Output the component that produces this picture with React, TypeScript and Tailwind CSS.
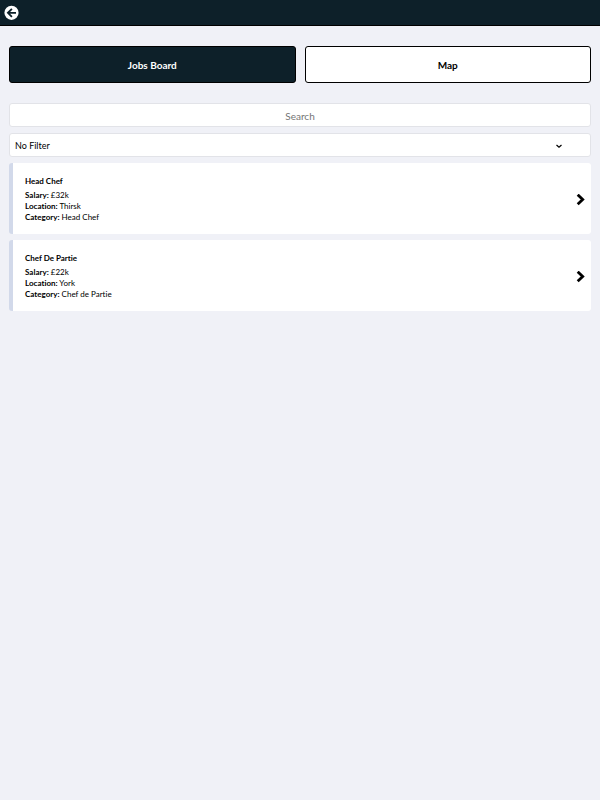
import React, { useState } from 'react';

interface Job {
  id: number;
  title: string;
  salary: string;
  location: string;
  category: string;
}

const jobs: Job[] = [
  { id: 1, title: 'Head Chef', salary: '£32k', location: 'Thirsk', category: 'Head Chef' },
  { id: 2, title: 'Chef De Partie', salary: '£22k', location: 'York', category: 'Chef de Partie' },
];

const categories = ['Head Chef', 'Chef de Partie'];

interface TabButtonProps {
  label: string;
  active: boolean;
  onClick: () => void;
}

const TabButton: React.FC<TabButtonProps> = ({ label, active, onClick }) => (
  <button
    type="button"
    onClick={onClick}
    className={`h-[37px] flex-1 rounded-[3px] border border-black pt-[2px] text-[10px] font-bold ${
      active ? 'bg-[#0d2029] text-white' : 'bg-white text-black'
    }`}
  >
    {label}
  </button>
);

const JobCard: React.FC<{ job: Job }> = ({ job }) => (
  <a
    href={`#job-${job.id}`}
    className="flex items-center justify-between rounded-[3px] border-l-4 border-[#d2d9ea] bg-white pt-[13px] pr-[5px] pb-[11px] pl-3 text-black"
  >
    <div className="text-[8px] leading-[11px]">
      <h2 className="mb-[3px] font-bold">{job.title}</h2>
      <p><strong>Salary:</strong> {job.salary}</p>
      <p><strong>Location:</strong> {job.location}</p>
      <p><strong>Category:</strong> {job.category}</p>
    </div>
    {/* Chevron */}
    <svg
      className="h-3 w-[10px]"
      viewBox="0 0 10 12"
      fill="none"
      stroke="currentColor"
      strokeWidth="2.8"
      aria-hidden="true"
    >
      <path d="M1.7 0.7 L6.7 5.5 L1.7 10.3" />
    </svg>
  </a>
);

const App: React.FC = () => {
  const [tab, setTab] = useState<'jobs' | 'map'>('jobs');
  const [search, setSearch] = useState('');
  const [filter, setFilter] = useState('');

  const visibleJobs = jobs.filter(
    (job) =>
      job.title.toLowerCase().includes(search.toLowerCase()) &&
      (!filter || job.category === filter)
  );

  return (
    <div className="min-h-screen bg-[#f0f1f7] font-['Lato',sans-serif] [font-variant-ligatures:none]">
      <header className="flex h-[26px] items-center border-b border-black bg-[#0d2029] px-1">
        <button type="button" aria-label="Back">
          <svg className="size-[15px]" viewBox="0 0 15 15" fill="none">
            <circle cx="7.5" cy="7.8" r="7.1" fill="white" />
            <path d="M12 7.8 H4 M7.9 3.8 L3.9 7.8 L7.9 11.8" stroke="#0d2029" strokeWidth="1.8" />
          </svg>
        </button>
      </header>

      <main className="px-[9px] pt-5">
        <div className="mb-5 flex gap-[9px]">
          <TabButton label="Jobs Board" active={tab === 'jobs'} onClick={() => setTab('jobs')} />
          <TabButton label="Map" active={tab === 'map'} onClick={() => setTab('map')} />
        </div>

        {tab === 'jobs' && (
          <div className="flex flex-col gap-[6px]">
            <input
              type="text"
              aria-label="Search"
              placeholder="Search"
              value={search}
              onChange={(e) => setSearch(e.target.value)}
              className="h-6 w-full rounded-[3px] border border-[#e2e3e8] bg-white pt-[2px] text-center text-[10px] outline-none placeholder:text-[#757575]"
            />

            <div className="relative">
              <select
                aria-label="Filter"
                value={filter}
                onChange={(e) => setFilter(e.target.value)}
                className="block h-6 w-full appearance-none rounded-[3px] border border-[#e2e3e8] bg-white px-[5px] pt-px text-[9px] text-black outline-none"
              >
                <option value="">No Filter</option>
                {categories.map((category) => (
                  <option key={category} value={category}>{category}</option>
                ))}
              </select>
              <svg
                className="pointer-events-none absolute top-[11px] right-7 h-[5px] w-2"
                viewBox="0 0 8 5"
                fill="none"
                stroke="black"
                strokeWidth="1.2"
              >
                <path d="M1.5 1 L4 3.3 L6.5 1" />
              </svg>
            </div>

            {visibleJobs.map((job) => (
              <JobCard key={job.id} job={job} />
            ))}
          </div>
        )}
      </main>
    </div>
  );
};

export default App;
